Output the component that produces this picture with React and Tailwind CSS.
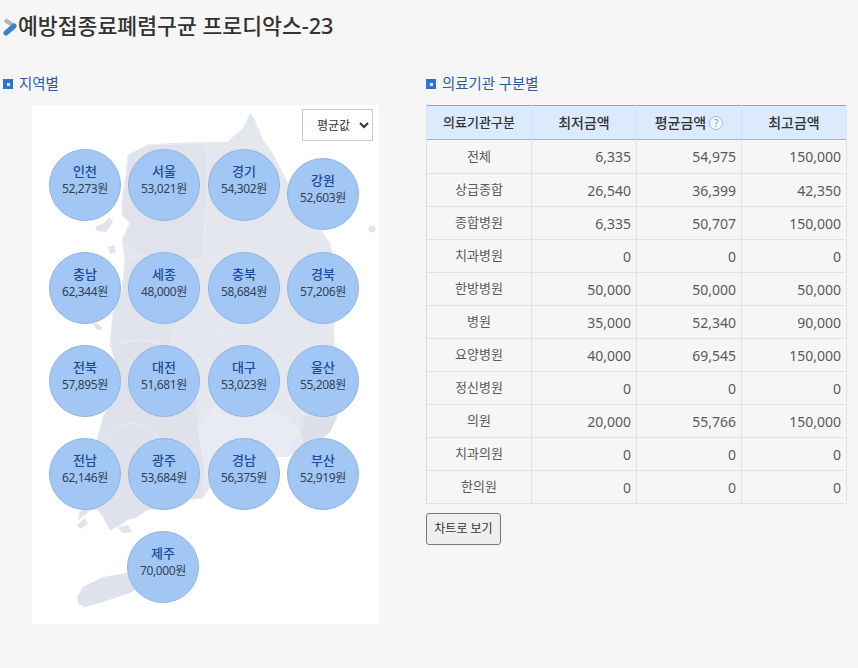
const regions = [
  { name: '인천', price: '52,273원', left: 17, top: 44 },
  { name: '서울', price: '53,021원', left: 96, top: 44 },
  { name: '경기', price: '54,302원', left: 176, top: 44 },
  { name: '강원', price: '52,603원', left: 255, top: 53 },
  { name: '충남', price: '62,344원', left: 17, top: 147 },
  { name: '세종', price: '48,000원', left: 96, top: 147 },
  { name: '충북', price: '58,684원', left: 176, top: 147 },
  { name: '경북', price: '57,206원', left: 255, top: 147 },
  { name: '전북', price: '57,895원', left: 17, top: 240 },
  { name: '대전', price: '51,681원', left: 96, top: 240 },
  { name: '대구', price: '53,023원', left: 176, top: 240 },
  { name: '울산', price: '55,208원', left: 255, top: 240 },
  { name: '전남', price: '62,146원', left: 17, top: 333 },
  { name: '광주', price: '53,684원', left: 96, top: 333 },
  { name: '경남', price: '56,375원', left: 176, top: 333 },
  { name: '부산', price: '52,919원', left: 255, top: 333 },
  { name: '제주', price: '70,000원', left: 95, top: 426 },
]

const rows = [
  ['전체', '6,335', '54,975', '150,000'],
  ['상급종합', '26,540', '36,399', '42,350'],
  ['종합병원', '6,335', '50,707', '150,000'],
  ['치과병원', '0', '0', '0'],
  ['한방병원', '50,000', '50,000', '50,000'],
  ['병원', '35,000', '52,340', '90,000'],
  ['요양병원', '40,000', '69,545', '150,000'],
  ['정신병원', '0', '0', '0'],
  ['의원', '20,000', '55,766', '150,000'],
  ['치과의원', '0', '0', '0'],
  ['한의원', '0', '0', '0'],
]

function SectionTitle({ children }) {
  return (
    <h2 className="flex items-center gap-[6px] h-[20px] text-[14.4px] font-normal text-[#2c5aa0]">
      <span className="flex items-center justify-center w-[10px] h-[10px] bg-[#2f74cf]">
        <span className="w-[3px] h-[3px] bg-[#dfeaf8]" />
      </span>
      {children}
    </h2>
  )
}

// outline traced in page coordinates, the group shifts it into the panel
function KoreaMap() {
  return (
    <svg viewBox="0 0 347 519" className="absolute inset-0 w-[347px] h-[519px]">
      <g transform="translate(-32 -105)">
        <path
          fill="#e5e7ef"
          d="M250 113 L254 118 L258 128 L263 140 L272 152 L283 173 L292 192 L304 212 L323 233 L330 243 L335 262 L337 290 L334 333 L336 370 L338 400 L337 417 L330 432 L320 440 L305 446 L287 457 L270 457 L250 468 L230 478 L210 488 L203 498 L185 500 L165 508 L147 510 L135 518 L127 520 L120 525 L110 530 L103 517 L98 510 L90 510 L78 520 L80 512 L90 500 L97 480 L97 440 L103 417 L115 395 L118 370 L110 345 L113 313 L122 290 L125 263 L122 240 L130 223 L122 215 L122 200 L126 175 L128 155 L137 153 L147 145 L173 143 L207 142 L227 142 L243 128 Z"
        />
        <path
          fill="#e0e3eb"
          stroke="#eaecf2"
          d="M126 175 L128 155 L147 145 L205 143 L208 180 L205 220 L203 258 L175 262 L140 255 L125 245 L122 240 L130 223 L122 215 L122 200 Z"
        />
        <path
          fill="#e2e4ec"
          stroke="#eaecf2"
          d="M125 263 L140 255 L175 262 L185 300 L170 345 L140 340 L110 345 L113 313 L122 290 Z"
        />
        <path
          fill="#dfe2ea"
          stroke="#eaecf2"
          d="M110 345 L140 340 L170 345 L197 365 L198 427 L205 470 L203 498 L185 500 L165 508 L147 510 L135 518 L127 520 L120 525 L110 530 L103 517 L98 510 L90 510 L78 520 L80 512 L90 500 L97 480 L97 440 L103 417 L115 395 L118 370 Z"
        />
        <path fill="none" stroke="#eaecf2" d="M97 437 L130 423 L150 427 L160 440 M203 258 L225 252 L240 262 L210 300 L212 330 L225 345 L245 345" />
        <path fill="#e9ebf2" d="M198 427 L215 405 L245 395 L280 412 L300 430 L287 457 L270 457 L250 468 L230 478 L210 488 L205 470 Z" />
        <path fill="#dde0e9" d="M305 416 L337 417 L330 432 L320 440 L305 446 L300 430 Z" />
        <path
          fill="#e2e4ec"
          d="M95 227 L104 223 L110 217 L113 222 L106 232 L97 231 Z M108 247 L114 245 L116 252 L110 254 Z M92 322 L100 325 L103 331 L96 329 Z M77 525 L85 518 L88 524 L80 529 Z M118 527 L128 525 L132 532 L122 533 Z"
        />
        <circle cx="372" cy="229" r="3.5" fill="#e2e4ec" />
        <path
          fill="#dfe2ea"
          d="M77 597 L83 587 L103 577 L127 573 L135 575 L135 590 L130 593 L103 602 L85 607 L78 603 Z"
        />
      </g>
    </svg>
  )
}

function RegionBubble({ region }) {
  return (
    <div
      className="absolute flex flex-col items-center justify-center w-[72px] h-[72px] pb-[11px] rounded-full bg-[#a2c7f5] border border-[#8fb3e0]"
      style={{ left: region.left, top: region.top }}
    >
      <span className="text-[13px] leading-[17px] font-medium text-[#1d4a9c]">{region.name}</span>
      <span className="text-[12px] leading-[17px] tracking-[-0.4px] text-[#333f55]">{region.price}</span>
    </div>
  )
}

export default function App() {
  return (
    <div className="w-[858px] h-[668px] overflow-hidden bg-[#f6f6f6] text-[#444] font-['Noto_Sans','Noto_Sans_CJK_KR',sans-serif]">
      <h1 className="flex items-center h-[52px] pl-[3px] text-[21.6px] font-medium text-[#333]">
        <svg viewBox="0 0 15 20" className="w-[15px] h-[20px] mt-[2px]">
          <path d="M2 3 L11 9" fill="none" stroke="#b4b4b8" strokeWidth="4" />
          <path d="M11 9 L3 16" fill="none" stroke="#3a80d2" strokeWidth="5" strokeLinecap="round" />
        </svg>
        <span>예방접종료폐렴구균 프로디악스-23</span>
      </h1>

      <div className="flex mt-[22px]">
        <section className="w-[426px] pl-[3px]">
          <SectionTitle>지역별</SectionTitle>
          <div className="relative ml-[29px] mt-[11px] w-[347px] h-[519px] bg-white">
            <KoreaMap />
            {regions.map(r => <RegionBubble key={r.name} region={r} />)}
            <select className="absolute top-[4px] right-[6px] w-[71px] h-[32px] pl-[10px] bg-white border border-[#c8c8c8] text-[12px] text-[#333]">
              <option>평균값</option>
            </select>
          </div>
        </section>

        <section className="w-[421px]">
          <SectionTitle>의료기관 구분별</SectionTitle>
          <table className="mt-[11px] w-[421px] table-fixed border-collapse text-[14px]">
            <thead>
              <tr className="h-[34px] bg-[#dceafd] border-t border-t-[#7fa6d6] border-b border-b-[#9fb2cc] text-[#333]">
                <th className="w-[105px] font-medium text-[13px] border-l border-l-[#dbe7f7]">의료기관구분</th>
                <th className="w-[105px] font-medium border-l border-l-[#d3e2f5]">최저금액</th>
                <th className="w-[105px] font-medium border-l border-l-[#d3e2f5]">
                  <span className="inline-flex items-center justify-center gap-[3px]">
                    평균금액
                    <span className="flex items-center justify-center w-[14px] h-[14px] rounded-full bg-[#f2f7fd] border border-[#9fbbdc] text-[10px] leading-none font-normal text-[#7f9fc5]">?</span>
                  </span>
                </th>
                <th className="font-medium border-l border-l-[#d3e2f5] border-r border-r-[#dbe7f7]">최고금액</th>
              </tr>
            </thead>
            <tbody className="border-b border-b-[#a9b1c0]">
              {rows.map(row => (
                <tr key={row[0]} className="h-[33px] first:h-[34px] border-b border-b-[#e2e2e2]">
                  <td className="text-center text-[13px] border-l border-l-[#dcdcdc] text-[#5a5a5a]">{row[0]}</td>
                  {row.slice(1).map((v, i) => (
                    <td key={i} className="px-[5px] text-right border-l border-l-[#e2e2e2] last:border-r last:border-r-[#e2e2e2] text-[#5a5a5a]">{v}</td>
                  ))}
                </tr>
              ))}
            </tbody>
          </table>
          <button className="mt-[9px] w-[75px] h-[32px] rounded-[3px] bg-[#efefef] border border-[#767676] text-[12px] text-[#333]">차트로 보기</button>
        </section>
      </div>
    </div>
  )
}
